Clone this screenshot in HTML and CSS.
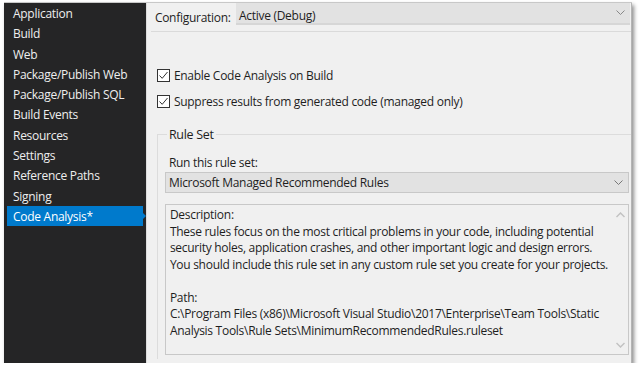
FILE: index.html
```html
<!DOCTYPE html>
<html lang="en">
<head>
  <meta charset="UTF-8" />
  <title>Code Analysis</title>
  <link rel="stylesheet" href="styles.css">
</head>
<body>
  <div class="ventana">
    <!-- Lista de páginas -->
    <ul class="lateral">
      <li>Application</li>
      <li>Build</li>
      <li>Web</li>
      <li>Package/Publish Web</li>
      <li>Package/Publish SQL</li>
      <li>Build Events</li>
      <li>Resources</li>
      <li>Settings</li>
      <li>Reference Paths</li>
      <li>Signing</li>
      <li class="activo">Code Analysis*</li>
    </ul>

    <div class="panel">
      <div class="config">
        <span class="config-label">Configuration:</span>
        <div class="combo combo-config">
          <span>Active (Debug)</span>
          <svg class="flecha" width="9" height="6" viewBox="0 0 9 6"><path d="M0.5 0.5 L4.5 4.5 L8.5 0.5" fill="none" stroke="#888" stroke-width="1"/></svg>
        </div>
      </div>
      <div class="separador"></div>

      <div class="checks">
        <label class="check"><span class="caja"><svg width="11" height="11" viewBox="0 0 11 11"><path d="M1.5 5.5 L4.2 8.3 L9.5 2" fill="none" stroke="#333" stroke-width="1"/></svg></span>Enable Code Analysis on Build</label>
        <label class="check"><span class="caja"><svg width="11" height="11" viewBox="0 0 11 11"><path d="M1.5 5.5 L4.2 8.3 L9.5 2" fill="none" stroke="#333" stroke-width="1"/></svg></span>Suppress results from generated code (managed only)</label>
      </div>

      <fieldset class="grupo">
        <legend>Rule Set</legend>
        <div class="grupo-label">Run this rule set:</div>
        <div class="combo combo-reglas">
          <span>Microsoft Managed Recommended Rules</span>
          <svg class="flecha" width="9" height="6" viewBox="0 0 9 6"><path d="M0.5 0.5 L4.5 4.5 L8.5 0.5" fill="none" stroke="#777" stroke-width="1"/></svg>
        </div>
        <div class="descripcion">
          <div class="descripcion-texto">
            Description:<br>
            These rules focus on the most critical problems in your code, including potential<br>
            security holes, application crashes, and other important logic and design errors.<br>
            You should include this rule set in any custom rule set you create for your projects.<br>
            <br>
            Path:<br>
            C:\Program Files (x86)\Microsoft Visual Studio\2017\Enterprise\Team Tools\Static<br>
            Analysis Tools\Rule Sets\MinimumRecommendedRules.ruleset
          </div>
          <div class="scroll">
            <svg width="9" height="6" viewBox="0 0 9 6"><path d="M0.5 5 L4.5 1 L8.5 5" fill="none" stroke="#c2c2c2" stroke-width="1.5"/></svg>
            <svg width="9" height="6" viewBox="0 0 9 6"><path d="M0.5 1 L4.5 5 L8.5 1" fill="none" stroke="#c2c2c2" stroke-width="1.5"/></svg>
          </div>
        </div>
      </fieldset>
    </div>
  </div>
</body>
</html>
```

FILE: styles.css
```css
body {
  margin: 0;
  background: #ffffff;
  font-family: 'Open Sans', 'Noto Sans', sans-serif;
  font-size: 12px;
  letter-spacing: -0.28px;
  color: #1e1e1e;
}

.ventana {
  margin: 2px 0 0 4px;
  width: 628px;
  height: 360px;
  display: flex;
  border-top: 1px solid #c8c8c8;
  box-shadow: 2px 3px 4px rgba(0, 0, 0, 0.45);
  background: #f0f0f0;
}

.lateral {
  list-style: none;
  margin: 0;
  padding: 0 3px;
  width: 136px;
  background: #252526;
  color: #eeeeee;
}

.lateral li {
  height: 20.3px;
  line-height: 21px;
  padding-left: 6px;
  white-space: nowrap;
}

.lateral li.activo {
  background: #007acc;
  color: #ffffff;
  position: relative;
}

.lateral li.activo::after {
  content: '';
  position: absolute;
  right: -3px;
  top: 7px;
  border-left: 3px solid #007acc;
  border-top: 3px solid transparent;
  border-bottom: 3px solid transparent;
}

.panel {
  flex: 1;
  border-left: 1px solid #dcdcdc;
  border-right: 1px solid #b4b4b4;
  display: flex;
  flex-direction: column;
}

.config {
  display: flex;
  align-items: center;
  padding: 0 1px 0 8px;
  height: 22px;
}

.config-label {
  width: 81px;
  padding-top: 6px;
}

.combo {
  display: flex;
  align-items: center;
  justify-content: space-between;
  background: #e2e2e2;
  box-sizing: border-box;
  padding: 0 5px 0 3px;
}

.combo-config {
  flex: 1;
  height: 22px;
  border-bottom: 2px solid #d6d6d6;
  padding-top: 5px;
}

.combo-config .flecha {
  margin-top: -5px;
}

.separador {
  height: 1px;
  background: #dadada;
  margin: 6px 0 0 4px;
}

.checks {
  display: flex;
  flex-direction: column;
  gap: 8px;
  padding: 34px 0 0 10px;
}

.check {
  display: flex;
  align-items: center;
  gap: 4px;
  height: 18px;
}

.caja {
  width: 13px;
  height: 13px;
  box-sizing: border-box;
  border: 1px solid #333333;
  background: #ffffff;
  display: flex;
  align-items: center;
  justify-content: center;
}

.grupo {
  margin: 16px 0 4px 10px;
  padding: 11px 2px 4px 7px;
  border: 1px solid #dcdcdc;
  border-bottom: none;
  border-right: none;
  display: flex;
  flex-direction: column;
  flex: 1;
  min-height: 0;
}

.grupo legend {
  padding: 0 2px;
  margin-left: 2px;
  font-size: 12.5px;
}

.grupo-label {
  padding-left: 4px;
  height: 17px;
  line-height: 17px;
}

.combo-reglas {
  margin-top: 1px;
  height: 21px;
  border: 1px solid #c8c8c8;
}

.descripcion {
  margin-top: 11px;
  flex: 1;
  border: 1px solid #c8c8c8;
  display: flex;
}

.descripcion-texto {
  flex: 1;
  padding: 2px 4px;
  line-height: 16.5px;
  white-space: nowrap;
}

.scroll {
  width: 16px;
  display: flex;
  flex-direction: column;
  justify-content: space-between;
  align-items: center;
  padding: 7px 0 6px;
}
```
